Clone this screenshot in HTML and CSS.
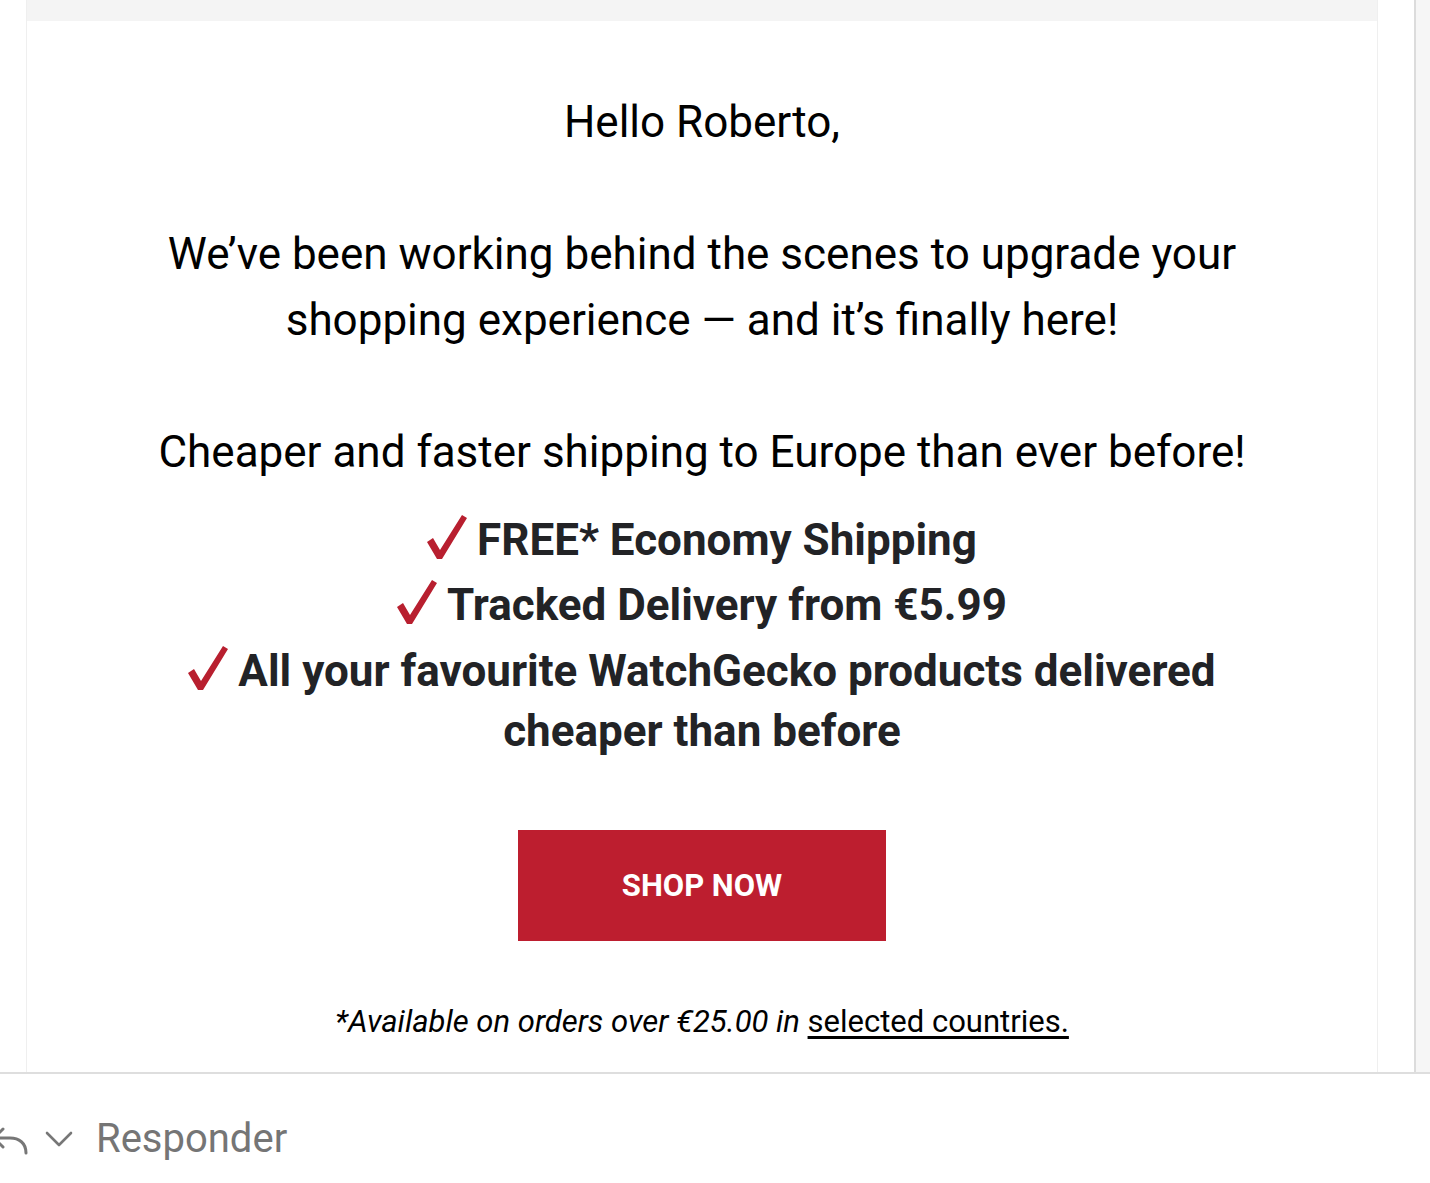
FILE: index.html
```html
<!DOCTYPE html>
<html lang="en">
<head>
<meta charset="utf-8">
<title>WatchGecko</title>
<link rel="stylesheet" href="styles.css">
</head>
<body>
<div class="screen">
  <div class="viewer">
    <div class="mail-area">
      <div class="card">
        <div class="card-top"></div>
        <div class="card-body">
          <p class="para">Hello Roberto,</p>
          <p class="para">We’ve been working behind the scenes to upgrade your<br>shopping experience — and it’s finally here!</p>
          <p class="para">Cheaper and faster shipping to Europe than ever before!</p>
          <ul class="checks">
            <li class="check-item"><svg class="tick" viewBox="0 0 40 44"><polygon points="0,27 6,23 13,35 35,0 40,3 15,44 10,44"/></svg>FREE* Economy Shipping</li>
            <li class="check-item"><svg class="tick" viewBox="0 0 40 44"><polygon points="0,27 6,23 13,35 35,0 40,3 15,44 10,44"/></svg>Tracked Delivery from €5.99</li>
            <li class="check-item wrap"><svg class="tick" viewBox="0 0 40 44"><polygon points="0,27 6,23 13,35 35,0 40,3 15,44 10,44"/></svg>All your favourite WatchGecko products delivered<br>cheaper than before</li>
          </ul>
          <a class="shop-btn" href="#">SHOP NOW</a>
          <p class="note">*Available on orders over €25.00 in <a class="note-link" href="#">selected countries.</a></p>
        </div>
      </div>
    </div>
    <div class="scroll-strip"></div>
  </div>
  <div class="divider"></div>
  <div class="reply-bar">
    <svg class="reply-icon" viewBox="0 0 40 40"><path d="M13 9 L4 18 L13 27 M4 18 H20 C29 18 36 23 36 33" fill="none" stroke="#777" stroke-width="3" stroke-linecap="round" stroke-linejoin="round"/></svg>
    <svg class="chev" viewBox="0 0 28 16"><path d="M2 2 L14 14 L26 2" fill="none" stroke="#777" stroke-width="2.6" stroke-linecap="round" stroke-linejoin="round"/></svg>
    <span class="reply-label">Responder</span>
  </div>
</div>
</body>
</html>
```

FILE: styles.css
```css
html, body {
  margin: 0;
  padding: 0;
  background: #ffffff;
}
body {
  font-family: Roboto, "Liberation Sans", sans-serif;
  color: #000;
}
.screen {
  width: 1430px;
  height: 1183px;
  display: flex;
  flex-direction: column;
  overflow: hidden;
}
.viewer {
  height: 1072px;
  display: flex;
  flex-direction: row;
  overflow: hidden;
}
.mail-area {
  width: 1414px;
  padding-left: 26px;
  box-sizing: border-box;
}
.card {
  width: 1352px;
  height: 100%;
  box-sizing: border-box;
  border-left: 1px solid #efefef;
  border-right: 1px solid #efefef;
}
.card-top {
  height: 21px;
  background: #f4f4f4;
}
.card-body {
  text-align: center;
  padding-top: 68px;
}
.para {
  margin: 0 0 66px;
  font-size: 44px;
  line-height: 66px;
  color: #000;
}
.para:nth-of-type(3) {
  margin-bottom: 23px;
}
.checks {
  list-style: none;
  margin: 0;
  padding: 0;
}
.check-item {
  font-size: 44px;
  font-weight: 700;
  line-height: 65px;
  color: #222326;
}
.check-item.wrap {
  line-height: 60px;
  padding-top: 3px;
}
.tick {
  width: 40px;
  height: 44px;
  fill: #b81f2f;
  margin-right: 10px;
  vertical-align: -4px;
}
.shop-btn {
  display: flex;
  align-items: center;
  justify-content: center;
  width: 368px;
  height: 111px;
  margin: 69px auto 0;
  background: #bd1e2f;
  color: #ffffff;
  font-size: 31px;
  font-weight: 700;
  text-decoration: none;
}
.note {
  margin: 61px 0 0;
  font-size: 31px;
  line-height: 40px;
  font-style: italic;
  color: #000;
}
.note-link {
  font-style: normal;
  color: #000;
  text-decoration: underline;
  text-underline-offset: 4px;
}
.scroll-strip {
  flex: 1;
  border-left: 2px solid #dcdcdc;
  background: #f6f6f6;
}
.divider {
  height: 2px;
  background: #dedede;
}
.reply-bar {
  flex: 1;
  display: flex;
  align-items: center;
  padding-top: 20px;
}
.reply-icon {
  width: 40px;
  height: 40px;
  margin-left: -10px;
  margin-top: 2px;
}
.chev {
  width: 28px;
  height: 16px;
  margin-left: 15px;
}
.reply-label {
  margin-left: 23px;
  font-size: 40px;
  color: #757575;
}
```
